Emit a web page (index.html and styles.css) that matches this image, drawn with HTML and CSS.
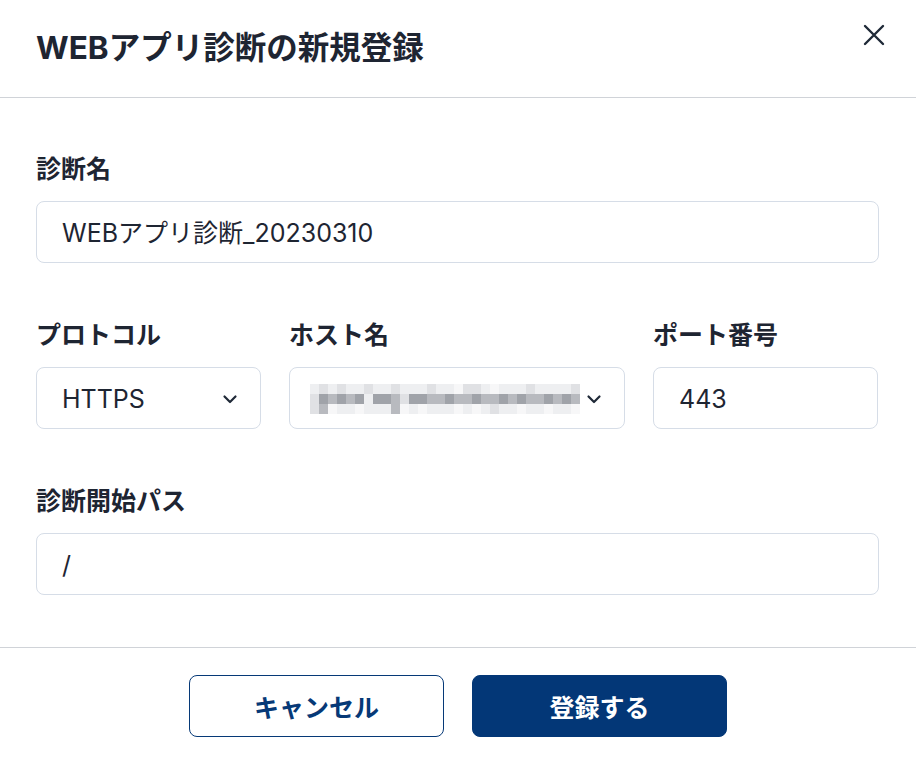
FILE: index.html
```html
<!DOCTYPE html>
<html lang="ja">
<head>
<meta charset="utf-8">
<link rel="stylesheet" href="styles.css">
</head>
<body>
<div class="modal">
  <header class="head">
    <h1 class="title">WEBアプリ診断の新規登録</h1>
    <button class="close" aria-label="閉じる">
      <svg width="24" height="24" viewBox="0 0 24 24"><path d="M3 3 L21 21 M21 3 L3 21" stroke="#1f2937" stroke-width="2.4" stroke-linecap="round" fill="none"/></svg>
    </button>
  </header>
  <main class="body">
    <div class="field">
      <label class="label">診断名</label>
      <div class="input">WEBアプリ診断_20230310</div>
    </div>
    <div class="row">
      <div class="field proto">
        <label class="label">プロトコル</label>
        <div class="input select"><span>HTTPS</span>
          <svg class="chev" width="16" height="16" viewBox="0 0 16 16"><path d="M2.5 5.5 L8 11 L13.5 5.5" stroke="#1f2937" stroke-width="2.2" fill="none" stroke-linecap="round" stroke-linejoin="round"/></svg>
        </div>
      </div>
      <div class="field host">
        <label class="label">ホスト名</label>
        <div class="input select">
          <div class="pix">
            <i class="a"></i><i class="b"></i><i class="a"></i><i class="b"></i><i class="a"></i><i class="a"></i><i class="b"></i><i class="a"></i><i class="a"></i><i class="b"></i><i class="a"></i><i class="a"></i><i class="a"></i><i class="b"></i><i class="a"></i><i class="a"></i><i class="e"></i><i class="b"></i><i class="b"></i><i class="a"></i><i class="e"></i><i class="a"></i><i class="a"></i><i class="a"></i><i class="b"></i><i class="a"></i><i class="a"></i><i class="a"></i><i class="a"></i><i class="b"></i>
            <i class="b"></i><i class="d"></i><i class="c"></i><i class="d"></i><i class="c"></i><i class="d"></i><i class="a"></i><i class="d"></i><i class="d"></i><i class="c"></i><i class="b"></i><i class="d"></i><i class="d"></i><i class="c"></i><i class="c"></i><i class="d"></i><i class="c"></i><i class="c"></i><i class="d"></i><i class="c"></i><i class="c"></i><i class="d"></i><i class="c"></i><i class="d"></i><i class="c"></i><i class="c"></i><i class="d"></i><i class="c"></i><i class="d"></i><i class="c"></i>
            <i class="b"></i><i class="c"></i><i class="e"></i><i class="a"></i><i class="a"></i><i class="e"></i><i class="a"></i><i class="a"></i><i class="a"></i><i class="c"></i><i class="e"></i><i class="a"></i><i class="e"></i><i class="a"></i><i class="a"></i><i class="a"></i><i class="e"></i><i class="a"></i><i class="e"></i><i class="a"></i><i class="b"></i><i class="a"></i><i class="a"></i><i class="e"></i><i class="a"></i><i class="a"></i><i class="e"></i><i class="a"></i><i class="a"></i><i class="e"></i>
          </div>
          <svg class="chev" width="16" height="16" viewBox="0 0 16 16"><path d="M2.5 5.5 L8 11 L13.5 5.5" stroke="#1f2937" stroke-width="2.2" fill="none" stroke-linecap="round" stroke-linejoin="round"/></svg>
        </div>
      </div>
      <div class="field port">
        <label class="label">ポート番号</label>
        <div class="input">443</div>
      </div>
    </div>
    <div class="field">
      <label class="label">診断開始パス</label>
      <div class="input">/</div>
    </div>
  </main>
  <footer class="foot">
    <button class="btn btn-outline">キャンセル</button>
    <button class="btn btn-primary">登録する</button>
  </footer>
</div>
</body>
</html>
```

FILE: styles.css
```css
* { box-sizing: border-box; }
html, body { margin: 0; padding: 0; background: #fff; }
body {
  font-family: "Inter", "Noto Sans CJK JP", "Noto Sans", sans-serif;
  color: #1e2532;
  width: 916px;
  height: 760px;
  overflow: hidden;
}
.modal { display: flex; flex-direction: column; height: 760px; }
.head {
  height: 98px;
  border-bottom: 1px solid #d0d3d8;
  padding: 0 30px 2px 36px;
  display: flex;
  align-items: center;
  justify-content: space-between;
}
.title {
  margin: 0;
  font-size: 31.5px;
  font-weight: 700;
  line-height: 1;
}
.close {
  border: 0;
  background: none;
  padding: 0;
  margin-top: -26px;
  width: 24px;
  height: 24px;
  cursor: pointer;
}
.body {
  padding: 55px 37px 52px 36px;
  display: flex;
  flex-direction: column;
  gap: 56px;
  border-bottom: 1px solid #d0d3d8;
}
.field { display: flex; flex-direction: column; }
.label {
  font-size: 25px;
  font-weight: 700;
  line-height: 32px;
  margin-bottom: 16px;
}
.input {
  height: 62px;
  border: 1px solid #d6dde7;
  border-radius: 8px;
  padding: 2px 25px 0;
  display: flex;
  align-items: center;
  font-size: 25px;
  line-height: 1;
  color: #1e2532;
}
.row { display: flex; gap: 28px; }
.proto { width: 225px; }
.host { width: 336px; }
.port { width: 225px; }
.select { justify-content: space-between; padding-right: 22px; }
.select .chev { flex: none; }
.host .select { padding-left: 20px; padding-right: 22px; }
.pix {
  display: grid;
  grid-template-columns: repeat(30, 9px);
  grid-auto-rows: 10px;
}
.pix i { display: block; }
.pix .a { background: #eeeff1; }
.pix .b { background: #e0e1e4; }
.pix .c { background: #b8babf; }
.pix .d { background: #a0a3a9; }
.pix .e { background: #f7f7f8; }
.foot {
  padding-top: 27px;
  display: flex;
  justify-content: center;
  gap: 28px;
}
.btn {
  width: 255px;
  height: 62px;
  border-radius: 8px;
  font-family: "Inter", "Noto Sans CJK JP", "Noto Sans", sans-serif;
  font-size: 25px;
  font-weight: 700;
  cursor: pointer;
}
.btn-outline {
  background: #fff;
  border: 1px solid #063977;
  color: #063977;
}
.btn-primary {
  background: #033777;
  border: 1px solid #033777;
  color: #fff;
}
```
